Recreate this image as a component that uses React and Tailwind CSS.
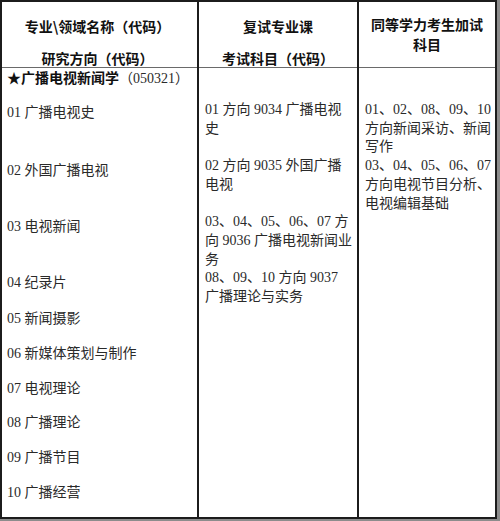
import React from 'react';

const font = { fontFamily: '"Noto Sans CJK SC", "Noto Sans", sans-serif' };
// narrower Latin digits, close to the Song-style widths of the original
const bodyFont = { fontFamily: '"Liberation Serif", "Noto Sans CJK SC", serif' };

const App = () => {
  return (
    <div className="w-[500px] h-[521px] bg-[#8c8c8c]" style={font}>
      <div className="w-[497px] h-[519px] bg-white border-2 border-[#1c1c1c] flex flex-col text-[14px] text-[#2a2a2a]">
        {/* header */}
        <div className="h-[66px] grid grid-cols-[197px_160px_1fr] border-b border-[#6a6a6a] text-[#111] font-semibold">
          <div className="border-r-2 border-[#1c1c1c] flex flex-col items-center pt-[14px] gap-[12px] leading-[20px] whitespace-nowrap">
            <div className="pr-[4px]">专业\领域名称（代码）</div>
            <div className="pr-[4px]">研究方向（代码）</div>
          </div>
          <div className="border-r-2 border-[#1c1c1c] flex flex-col items-center pt-[14px] gap-[12px] leading-[20px] whitespace-nowrap">
            <div>复试专业课</div>
            <div>考试科目（代码）</div>
          </div>
          <div className="flex flex-col items-center pt-[12px] leading-[20px] whitespace-nowrap">
            <div>同等学力考生加试</div>
            <div>科目</div>
          </div>
        </div>

        {/* body */}
        <div className="flex-1 grid grid-cols-[197px_160px_1fr]" style={bodyFont}>
          <div className="border-r-2 border-[#1c1c1c] pl-[5px] whitespace-nowrap">
            <div className="leading-[17px] pt-[1px]">
              <span className="text-[#111] font-semibold" style={font}>★广播电视新闻学</span>
              <span>（050321）</span>
            </div>
            <div className="leading-[19px]">
              <div className="mt-[16px]">01 广播电视史</div>
              <div className="mt-[39px]">02 外国广播电视</div>
              <div className="mt-[37px]">03 电视新闻</div>
              <div className="mt-[37px]">04 纪录片</div>
              <div className="mt-[17px]">05 新闻摄影</div>
              <div className="mt-[16px]">06 新媒体策划与制作</div>
              <div className="mt-[16px]">07 电视理论</div>
              <div className="mt-[15px]">08 广播理论</div>
              <div className="mt-[16px]">09 广播节目</div>
              <div className="mt-[16px]">10 广播经营</div>
            </div>
          </div>

          <div className="border-r-2 border-[#1c1c1c] pl-[6px] pt-[33px] leading-[18.7px] whitespace-nowrap">
            <div>01 方向 9034 广播电视</div>
            <div>史</div>
            <div className="mt-[18.7px]">02 方向 9035 外国广播</div>
            <div>电视</div>
            <div className="mt-[18.7px]">03、04、05、06、07 方</div>
            <div>向 9036 广播电视新闻业</div>
            <div>务</div>
            <div>08、09、10 方向 9037</div>
            <div>广播理论与实务</div>
          </div>

          <div className="pl-[6px] pt-[33px] leading-[18.7px] whitespace-nowrap">
            <div>01、02、08、09、10</div>
            <div>方向新闻采访、新闻</div>
            <div>写作</div>
            <div>03、04、05、06、07</div>
            <div>方向电视节目分析、</div>
            <div>电视编辑基础</div>
          </div>
        </div>
      </div>
    </div>
  );
};

export default App;
